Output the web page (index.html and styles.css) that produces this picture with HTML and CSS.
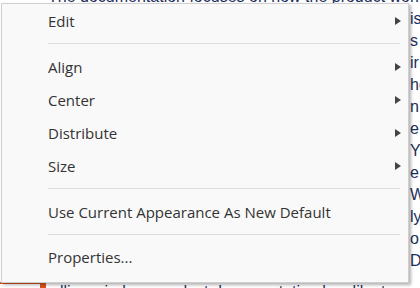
FILE: index.html
```html
<!DOCTYPE html>
<html>
<head>
<meta charset="utf-8">
<link rel="stylesheet" href="styles.css">
</head>
<body>
<div class="page">
  <p class="line l1">The documentation focuses on how the product works right</p>
  <p class="line">is</p>
  <p class="line">s</p>
  <p class="line">ir</p>
  <p class="line">ho</p>
  <p class="line">n</p>
  <p class="line">e</p>
  <p class="line">Y</p>
  <p class="line">e</p>
  <p class="line">W</p>
  <p class="line">ly</p>
  <p class="line">o</p>
  <p class="line">D</p>
  <p class="line lb">lling wireless product documentation has like to read</p>
  <div class="accent"></div>
  <div class="accent-dot"></div>
</div>

<div class="menu">
  <div class="item"><span class="label">Edit</span><span class="arrow"></span></div>
  <div class="sep"></div>
  <div class="item"><span class="label">Align</span><span class="arrow"></span></div>
  <div class="item"><span class="label">Center</span><span class="arrow"></span></div>
  <div class="item"><span class="label">Distribute</span><span class="arrow"></span></div>
  <div class="item"><span class="label">Size</span><span class="arrow"></span></div>
  <div class="sep"></div>
  <div class="item"><span class="label">Use Current Appearance As New Default</span></div>
  <div class="sep sep-last"></div>
  <div class="item"><span class="label">Properties...</span></div>
</div>
</body>
</html>
```
FILE: styles.css
```css
html, body {
  margin: 0;
  padding: 0;
  background: #ffffff;
  width: 420px;
  height: 288px;
  overflow: hidden;
}
.page {
  position: relative;
  width: 420px;
  height: 288px;
  overflow: hidden;
  font-family: "Liberation Sans", Arial, sans-serif;
  font-size: 16px;
  color: #1c2f5a;
}
.line {
  margin: 0;
  height: 22px;
  line-height: 22px;
  padding-left: 410px;
  white-space: nowrap;
}
.l1 {
  margin-top: -14px;
  padding-left: 48px;
}
.lb {
  margin-top: 9px;
  padding-left: 60px;
}
.accent {
  position: absolute;
  left: 0;
  top: 282px;
  width: 44px;
  height: 2px;
  background: #d9541e;
}
.accent-dot {
  position: absolute;
  left: 40px;
  top: 282px;
  width: 6px;
  height: 6px;
  background: #d9541e;
}
.menu {
  position: absolute;
  left: 1px;
  top: 3px;
  width: 406px;
  height: 278px;
  background: #f9f9f9;
  border: 1px solid #cfcfcf;
  box-shadow: 2px 2px 3px rgba(0, 0, 0, 0.3);
  padding-top: 0;
  box-sizing: content-box;
  font-family: "Open Sans", "Noto Sans", sans-serif;
  font-size: 15px;
  color: #333333;
  display: flex;
  flex-direction: column;
}
.item {
  height: 33px;
  display: flex;
  align-items: center;
  justify-content: space-between;
  padding-left: 46px;
  padding-right: 7px;
}
.label {
  white-space: nowrap;
}
.arrow {
  width: 0;
  height: 0;
  border-top: 4.5px solid transparent;
  border-bottom: 4.5px solid transparent;
  border-left: 6px solid #444;
}
.sep {
  height: 13px;
  display: flex;
  align-items: center;
  padding-left: 46px;
  padding-right: 8px;
}
.sep-last {
  height: 12px;
}
.sep::before {
  content: "";
  flex: 1;
  height: 1px;
  background: #dcdcdc;
}
```
